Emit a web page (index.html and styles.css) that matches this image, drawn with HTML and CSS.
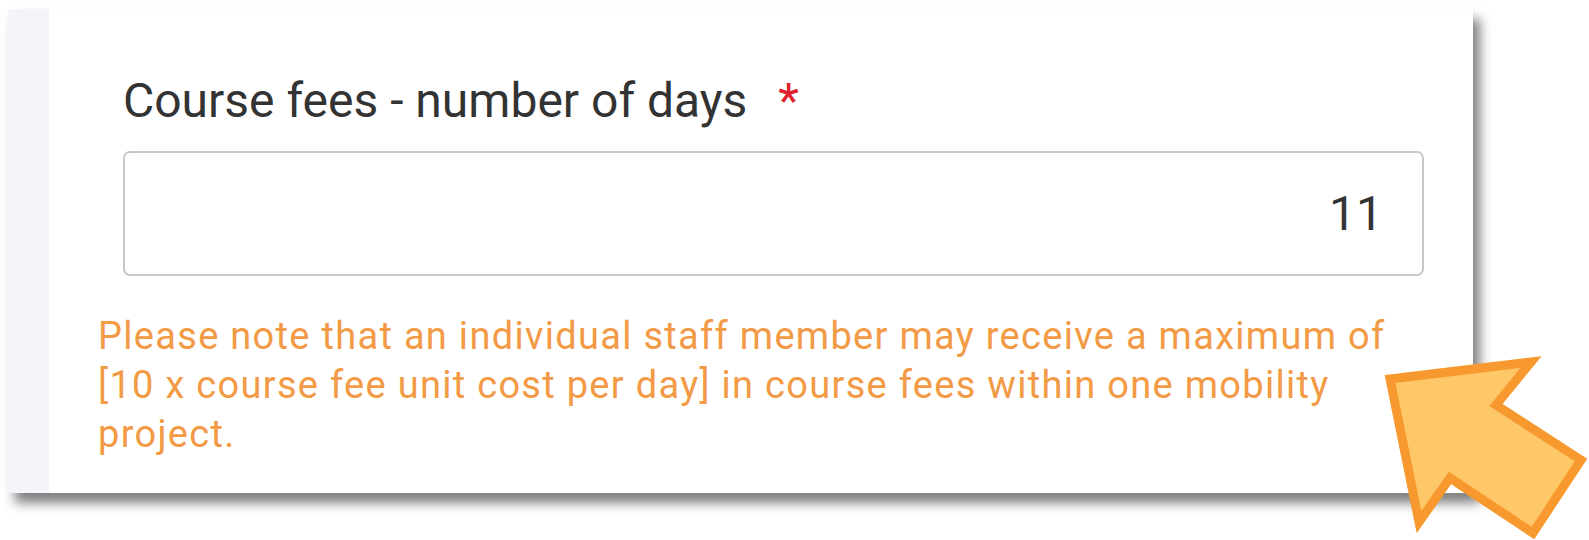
FILE: index.html
```html
<!DOCTYPE html>
<html lang="en">
<head>
    <meta charset="UTF-8">
    <meta name="viewport" content="width=device-width, initial-scale=1.0">
    <title>Course fees</title>
    <link rel="stylesheet" href="styles.css">
</head>
<body>
    <div class="page">
        <div class="card">
            <div class="field">
                <label class="field-label" for="courseDays">Course fees - number of days <span class="required">*</span></label>
                <input class="field-input" id="courseDays" type="text" value="11">
            </div>
            <div class="hint">Please note that an individual staff member may receive a maximum of [10 x course fee unit cost per day] in course fees within one mobility project.</div>
        </div>
    </div>

    <!-- callout arrow -->
    <svg class="pointer" width="1589" height="540" viewBox="0 0 1589 540">
        <polygon points="1390,379 1531,362 1496,405 1581,460 1533,533 1450,478 1419,522"
                 fill="#fec767" stroke="#f7992f" stroke-width="9" stroke-linejoin="miter"/>
    </svg>
</body>
</html>
```

FILE: styles.css
```css
html, body {
    margin: 0;
    background-color: #fff;
    font-family: Roboto, "Liberation Sans", sans-serif;
}
.page {
    min-height: 540px;
    padding: 9px 0 0 8px;
    box-sizing: border-box;
}
.card {
    width: 1424px;
    padding: 0 0 34px 0;
    background-color: #fff;
    border-left: 41px solid #f4f5f9;
    box-shadow: 7px 10px 11px rgba(0, 0, 0, 0.5);
}
.field {
    padding: 64px 49px 0 74px;
}
.field-label {
    display: block;
    font-size: 48px;
    line-height: 56px;
    color: #333;
    margin-bottom: 22px;
}
.required {
    color: #e0202e;
    margin-left: 19px;
}
.field-input {
    display: block;
    box-sizing: border-box;
    width: 100%;
    height: 125px;
    padding: 0 39px 0 20px;
    border: 2px solid #c8c8c8;
    border-radius: 7px;
    font-family: Roboto, "Liberation Sans", sans-serif;
    font-size: 48px;
    color: #333;
    text-align: right;
    outline: none;
}
.hint {
    margin: 36px 49px 0 49px;
    font-size: 38px;
    letter-spacing: 1.3px;
    line-height: 49px;
    color: #f29a45;
}
.pointer {
    position: absolute;
    left: 0;
    top: 0;
}
```
